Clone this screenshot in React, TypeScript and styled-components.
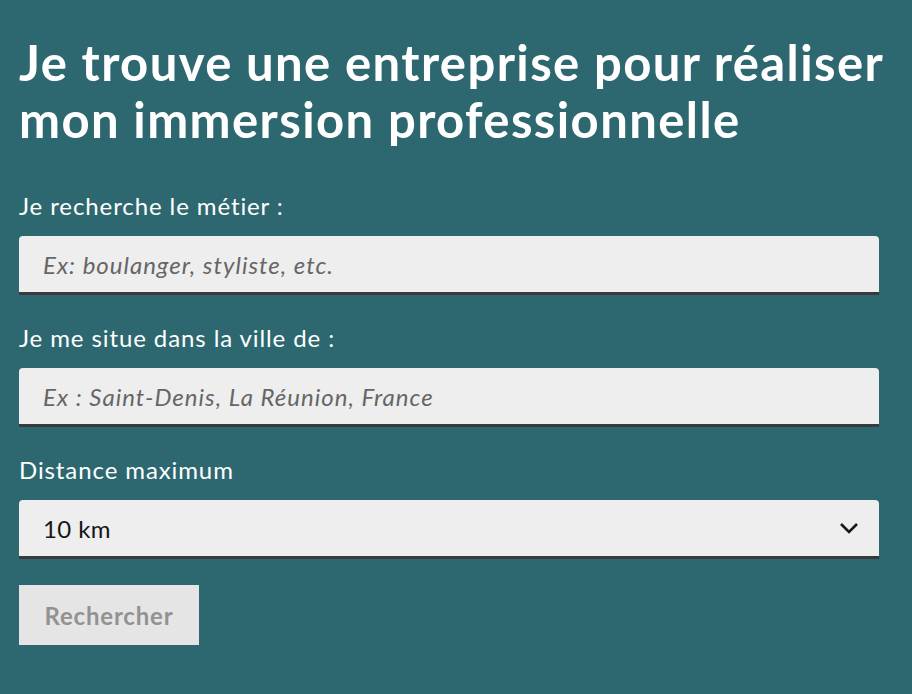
import styled, { createGlobalStyle } from 'styled-components';

const GlobalStyle = createGlobalStyle`
  html, body {
    margin: 0;
    padding: 0;
    background: #2d6870;
  }
  body {
    font-family: Lato, "Noto Sans", sans-serif;
  }
`;

const Page = styled.main`
  min-height: 694px;
  box-sizing: border-box;
  padding: 34px 33px 40px 19px;
  background: #2d6870;
  color: #ffffff;
`;

const Title = styled.h1`
  margin: 0 0 44px 0;
  font-size: 49px;
  line-height: 57px;
  font-weight: 700;
  letter-spacing: 1.4px;
  white-space: nowrap;
`;

const Form = styled.form`
  display: flex;
  flex-direction: column;
`;

const Field = styled.div`
  display: flex;
  flex-direction: column;
  margin-bottom: 29px;
`;

const Label = styled.label`
  font-size: 24px;
  line-height: 28px;
  letter-spacing: 0.9px;
  margin-bottom: 16px;
`;

const TextInput = styled.input`
  box-sizing: border-box;
  height: 59px;
  width: 100%;
  border: none;
  border-bottom: 3px solid #3a3a3a;
  border-radius: 4px 4px 0 0;
  background: #eeeeee;
  padding: 0 24px;
  font-family: inherit;
  font-size: 24px;
  letter-spacing: 1px;
  color: #1e1e1e;
  outline: none;

  &::placeholder {
    color: #666666;
    font-style: italic;
  }
`;

const SelectWrap = styled.div`
  position: relative;
`;

const Select = styled.select`
  box-sizing: border-box;
  height: 59px;
  width: 100%;
  border: none;
  border-bottom: 3px solid #3a3a3a;
  border-radius: 4px 4px 0 0;
  background: #eeeeee;
  padding: 0 24px;
  font-family: inherit;
  font-size: 24px;
  letter-spacing: 0.4px;
  color: #161616;
  appearance: none;
  outline: none;
`;

const Chevron = styled.svg`
  position: absolute;
  right: 20px;
  top: 21px;
  pointer-events: none;
`;

const Button = styled.button`
  align-self: flex-start;
  width: 180px;
  height: 60px;
  margin-top: -3px;
  padding: 0;
  border: none;
  background: #e5e5e5;
  color: #929292;
  font-family: inherit;
  font-size: 24px;
  font-weight: 700;
  letter-spacing: 0.8px;
`;

export default function App() {
  return (
    <>
      <GlobalStyle />
      <Page>
        <Title>
          Je trouve une entreprise pour réaliser
          <br />
          mon immersion professionnelle
        </Title>
        <Form onSubmit={e => e.preventDefault()}>
          <Field>
            <Label htmlFor="metier">Je recherche le métier :</Label>
            <TextInput id="metier" placeholder="Ex: boulanger, styliste, etc." />
          </Field>
          <Field>
            <Label htmlFor="ville">Je me situe dans la ville de :</Label>
            <TextInput id="ville" placeholder="Ex : Saint-Denis, La Réunion, France" />
          </Field>
          <Field>
            <Label htmlFor="distance">Distance maximum</Label>
            <SelectWrap>
              <Select id="distance" defaultValue="10">
                <option value="1">1 km</option>
                <option value="2">2 km</option>
                <option value="5">5 km</option>
                <option value="10">10 km</option>
                <option value="20">20 km</option>
                <option value="50">50 km</option>
              </Select>
              <Chevron width="20" height="14" viewBox="0 0 20 14">
                <path d="M2 3 L10 11 L18 3" fill="none" stroke="#161616" strokeWidth="2.6" />
              </Chevron>
            </SelectWrap>
          </Field>
          <Button type="submit" disabled>Rechercher</Button>
        </Form>
      </Page>
    </>
  );
}
